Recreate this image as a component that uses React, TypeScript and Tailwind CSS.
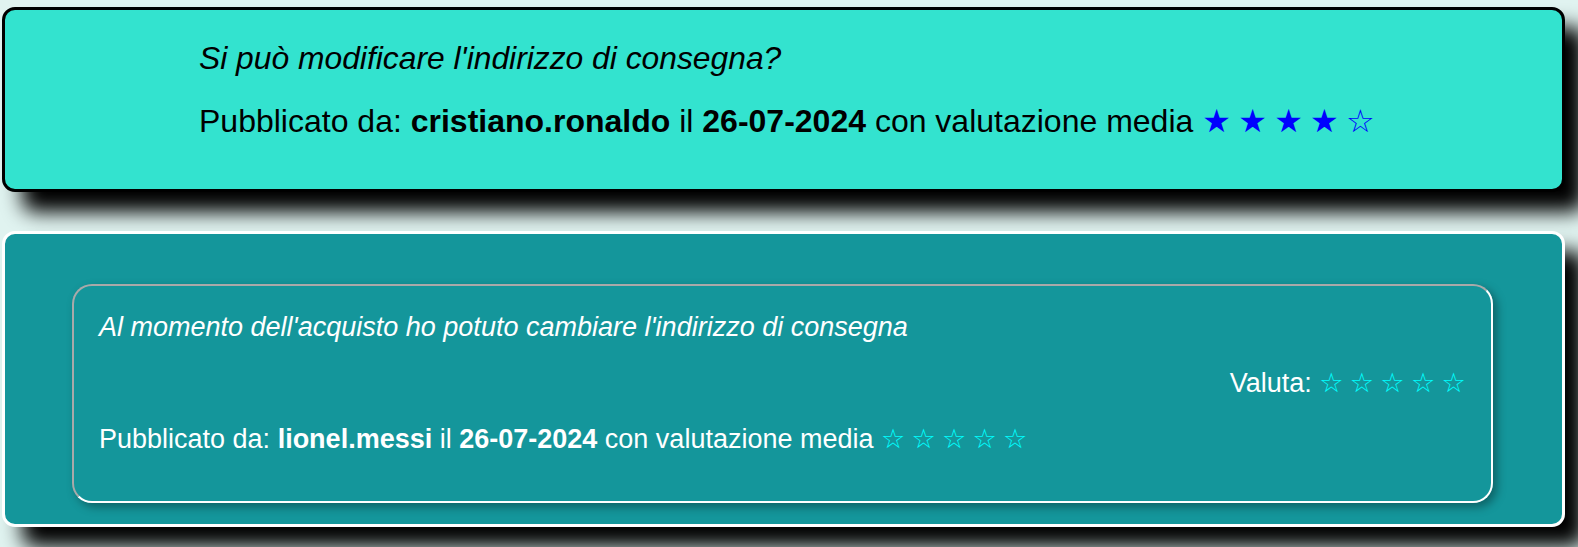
import React from "react";

const font = { fontFamily: '"Liberation Sans", Arial, "DejaVu Sans", sans-serif' };

export default function App() {
  return (
    <div
      className="min-h-[547px] w-full bg-[#e0f3f0] pl-[2px] pr-[13px] pt-[7px] pb-[30px] flex flex-col gap-[39px]"
      style={font}
    >
      <div className="rounded-[13px] border-[3px] border-black bg-[#33e3cf] pl-[194px] pt-[30px] pb-[49px] flex flex-col gap-[26px] shadow-[20px_20px_20px_#000] text-black">
        <p className="italic text-[31.8px] leading-[37px]">Si può modificare l'indirizzo di consegna?</p>
        <p className="text-[32px] leading-[37px]">
          Pubblicato da: <b>cristiano.ronaldo</b> il <b>26-07-2024</b> con valutazione media{" "}
          <span className="text-[#0000ff] tracking-[-0.8px]">★ ★ ★ ★ ☆</span>
        </p>
      </div>

      <div className="rounded-[13px] border-[3px] border-white bg-[#14969b] pl-[67px] pr-[69px] pt-[50px] pb-[21px] shadow-[20px_20px_20px_#000]">
        <div className="rounded-[20px] border-2 border-t-[#a9a9a9] border-l-[#a9a9a9] border-b-white border-r-white pl-[25px] pr-[26px] pt-[25px] pb-[46px] flex flex-col gap-[24px] text-white text-[27px] leading-[32px] shadow-[4px_4px_10px_rgba(0,0,0,0.35)]">
          <p className="italic">Al momento dell'acquisto ho potuto cambiare l'indirizzo di consegna</p>
          <p className="text-right">
            Valuta: <span className="text-[#00ffff] tracking-[-0.6px]">☆ ☆ ☆ ☆ ☆</span>
          </p>
          <p>
            Pubblicato da: <b>lionel.messi</b> il <b>26-07-2024</b> con valutazione media{" "}
            <span className="text-[#00ffff] tracking-[-0.6px]">☆ ☆ ☆ ☆ ☆</span>
          </p>
        </div>
      </div>
    </div>
  );
}
